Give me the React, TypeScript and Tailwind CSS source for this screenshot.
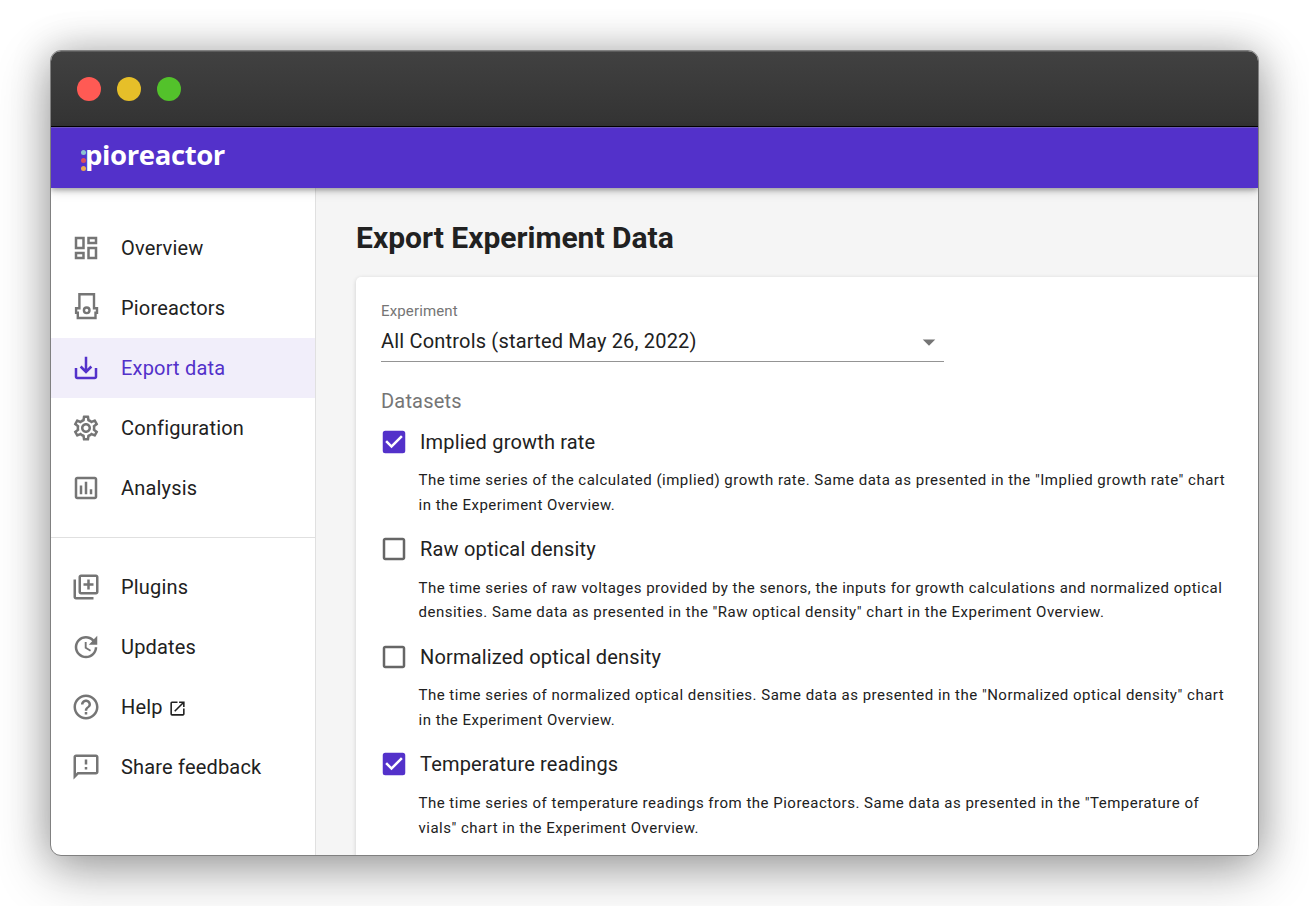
import type { ReactNode } from "react";
import {
  MdCheckBox,
  MdCheckBoxOutlineBlank,
  MdArrowDropDown,
  MdOutlineDashboard,
  MdSaveAlt,
  MdOutlineSettings,
  MdOutlineInsertChart,
  MdOutlineLibraryAdd,
  MdUpdate,
  MdHelpOutline,
  MdOutlineFeedback,
  MdOpenInNew,
} from "react-icons/md";

function PioreactorIcon() {
  return (
    <svg width="30" height="30" viewBox="0 0 30 30" fill="none" stroke="currentColor" strokeWidth="2.4">
      <path d="M8.4 15.3V1.2H23v14.1h3v4.4h-1.5V25H6.8v-5.3H5.1v-4.4z" />
      <circle cx="15.7" cy="17.3" r="2.8" />
    </svg>
  );
}

function NavItem({ icon, label, active, external }: { icon: ReactNode; label: string; active?: boolean; external?: boolean }) {
  return (
    <a
      className={
        active
          ? "flex h-[60px] items-center bg-[#f1eefa] pl-5 text-[#5331ca]"
          : "flex h-[60px] items-center pl-5 text-[#212121]"
      }
    >
      <span className={active ? "w-[50px] text-[30px] text-[#5331ca]" : "w-[50px] text-[30px] text-[#757575]"}>{icon}</span>
      <span className="text-[20px] tracking-[0.18px]">{label}</span>
      {external && <MdOpenInNew className="mt-[2px] ml-[5px] text-[19px]" />}
    </a>
  );
}

const datasets = [
  {
    name: "Implied growth rate",
    checked: true,
    lines: [
      'The time series of the calculated (implied) growth rate. Same data as presented in the "Implied growth rate" chart',
      "in the Experiment Overview.",
    ],
  },
  {
    name: "Raw optical density",
    checked: false,
    lines: [
      "The time series of raw voltages provided by the senors, the inputs for growth calculations and normalized optical",
      'densities. Same data as presented in the "Raw optical density" chart in the Experiment Overview.',
    ],
  },
  {
    name: "Normalized optical density",
    checked: false,
    lines: [
      'The time series of normalized optical densities. Same data as presented in the "Normalized optical density" chart',
      "in the Experiment Overview.",
    ],
  },
  {
    name: "Temperature readings",
    checked: true,
    lines: [
      'The time series of temperature readings from the Pioreactors. Same data as presented in the "Temperature of',
      'vials" chart in the Experiment Overview.',
    ],
  },
];

export default function App() {
  return (
    <div className="h-[906px] w-[1309px] overflow-hidden bg-white p-[50px] font-['Roboto',sans-serif]">
      <div className="flex h-[806px] w-[1209px] flex-col overflow-hidden rounded-[11px] border border-[#808080] bg-white shadow-[0_0_38px_rgba(0,0,0,0.22),0_16px_54px_rgba(0,0,0,0.3)]">
        <div className="flex h-[76px] shrink-0 items-center gap-4 border-t border-b border-t-[#5c5c5c] border-b-black bg-linear-to-b from-[#414141] to-[#333333] pl-[26px]">
          <span className="size-6 rounded-full bg-[#ff5a54]" />
          <span className="size-6 rounded-full bg-[#e6bf29]" />
          <span className="size-6 rounded-full bg-[#53c22b]" />
        </div>
        <header className="z-10 flex h-[61px] shrink-0 items-start border-t border-[#6a55b8] bg-[#5331ca] pl-[30px] shadow-[0_2px_5px_rgba(0,0,0,0.3),0_4px_10px_rgba(0,0,0,0.12)]">
          <span className="mt-[22px] flex w-[4px] shrink-0 flex-col gap-[3.5px]">
            <span className="size-[4.5px] rounded-full bg-[#8cc4d0]" />
            <span className="size-[4.5px] rounded-full bg-[#d8505f]" />
            <span className="size-[4.5px] rounded-full bg-[#eba950]" />
          </span>
          <span className="mt-[9px] font-['Open_Sans',sans-serif] text-[27.5px] leading-[36px] font-bold tracking-[-0.38px] text-white">pioreactor</span>
        </header>
        <div className="flex min-h-0 flex-1">
          <nav className="w-[265px] shrink-0 border-r border-[#e0e0e0] pt-[30px]">
            <NavItem icon={<MdOutlineDashboard />} label="Overview" />
            <NavItem icon={<PioreactorIcon />} label="Pioreactors" />
            <NavItem icon={<MdSaveAlt />} label="Export data" active />
            <NavItem icon={<MdOutlineSettings />} label="Configuration" />
            <NavItem icon={<MdOutlineInsertChart />} label="Analysis" />
            <div className="mt-[19px] mb-[19px] h-px bg-[#e0e0e0]" />
            <NavItem icon={<MdOutlineLibraryAdd />} label="Plugins" />
            <NavItem icon={<MdUpdate />} label="Updates" />
            <NavItem icon={<MdHelpOutline />} label="Help" external />
            <NavItem icon={<MdOutlineFeedback />} label="Share feedback" />
          </nav>
          <main className="flex-1 overflow-hidden bg-[#f5f5f5] pt-[30px] pl-10 text-[#212121]">
            <h1 className="h-[59px] text-[30px] leading-[40px] font-bold">Export Experiment Data</h1>
            <section className="h-[700px] w-[950px] rounded-[5px] bg-white px-[25px] pt-[24px] shadow-[0_1px_4px_rgba(0,0,0,0.16)]">
              <div className="text-[15px] leading-5 tracking-[0.14px] text-[#757575]">Experiment</div>
              <div className="flex h-[41px] w-[563px] items-center justify-between border-b border-[#949494] text-[20px] tracking-[0.19px]">
                <span>All Controls (started May 26, 2022)</span>
                <MdArrowDropDown className="mt-[2px] text-[30px] text-[#757575]" />
              </div>
              <div className="mt-[27px] h-[26.2px] text-[20px] leading-[25px] tracking-[0.19px] text-[#757575]">Datasets</div>
              {datasets.map((d) => (
                <div key={d.name} className="h-[107.58px]">
                  <label className="flex h-[52.75px] items-center">
                    {d.checked ? (
                      <MdCheckBox className="-ml-[2px] size-[30px] text-[#5331ca]" />
                    ) : (
                      <MdCheckBoxOutlineBlank className="-ml-[2px] size-[30px] text-[#666666]" />
                    )}
                    <span className="ml-[11px] text-[20px] tracking-[0.18px]">{d.name}</span>
                  </label>
                  <p className="ml-[37.5px] text-[15px] leading-[24.88px] tracking-[0.495px] whitespace-nowrap">
                    {d.lines[0]}
                    <br />
                    {d.lines[1]}
                  </p>
                </div>
              ))}
            </section>
          </main>
        </div>
      </div>
    </div>
  );
}
